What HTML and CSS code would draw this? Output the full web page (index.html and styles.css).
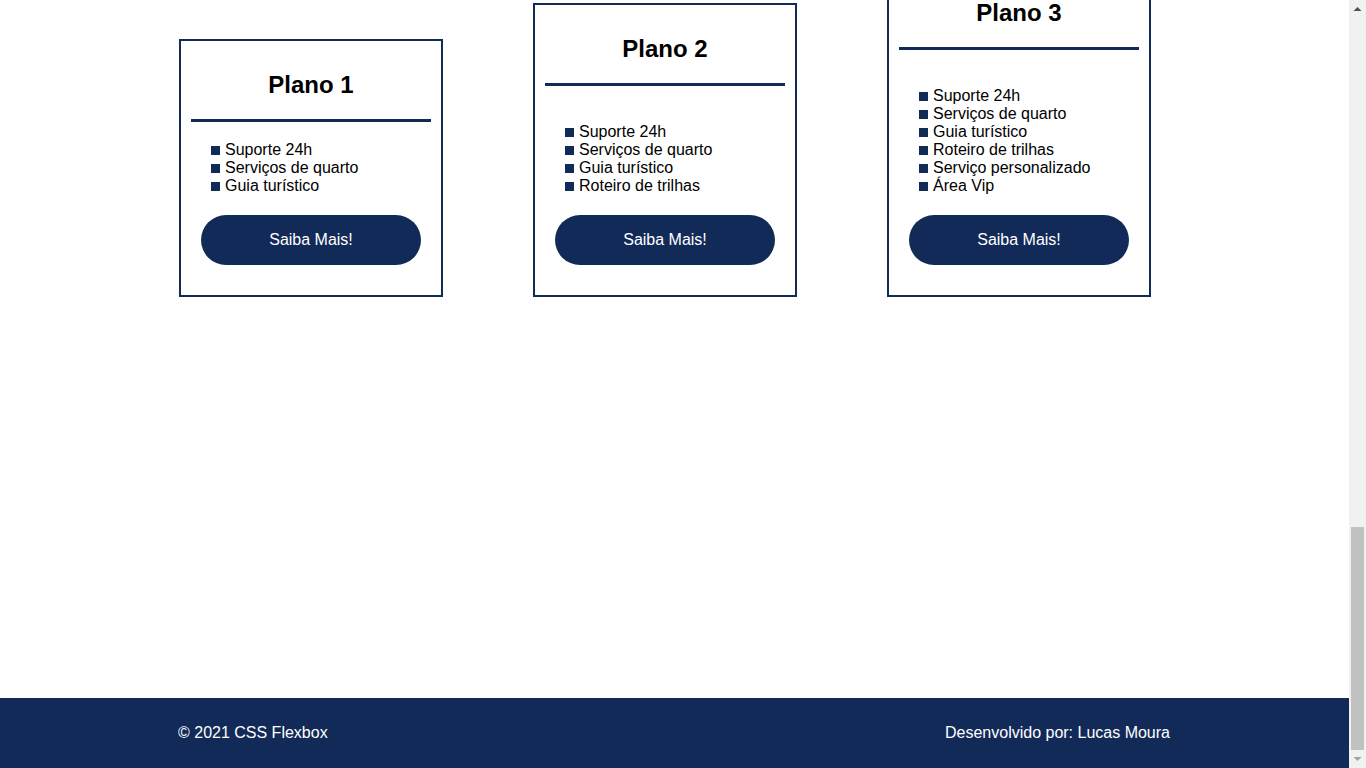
FILE: index.html
```html
<!DOCTYPE html>
<html lang="pt-BR">
<head>
<meta charset="utf-8">
<title>CSS Flexbox - Planos</title>
<link rel="stylesheet" href="styles.css">
</head>
<body>
<div class="window">
  <div class="page">
    <section class="plans">
      <article class="card">
        <h2 class="card-title">Plano 1</h2>
        <ul class="features features-short">
          <li>Suporte 24h</li>
          <li>Serviços de quarto</li>
          <li>Guia turístico</li>
        </ul>
        <a class="btn" href="#">Saiba Mais!</a>
      </article>
      <article class="card">
        <h2 class="card-title">Plano 2</h2>
        <ul class="features">
          <li>Suporte 24h</li>
          <li>Serviços de quarto</li>
          <li>Guia turístico</li>
          <li>Roteiro de trilhas</li>
        </ul>
        <a class="btn" href="#">Saiba Mais!</a>
      </article>
      <article class="card">
        <h2 class="card-title">Plano 3</h2>
        <ul class="features">
          <li>Suporte 24h</li>
          <li>Serviços de quarto</li>
          <li>Guia turístico</li>
          <li>Roteiro de trilhas</li>
          <li>Serviço personalizado</li>
          <li>Área Vip</li>
        </ul>
        <a class="btn" href="#">Saiba Mais!</a>
      </article>
    </section>
    <div class="spacer"></div>
    <footer class="footer">
      <p>© 2021 CSS Flexbox</p>
      <p>Desenvolvido por: Lucas Moura</p>
    </footer>
  </div>
  <aside class="scrollbar">
    <div class="sb-btn">
      <svg width="17" height="17" viewBox="0 0 17 17"><polygon points="4.5,11 12.5,11 8.5,7" fill="#505050"/></svg>
    </div>
    <div class="sb-track"><div class="sb-thumb"></div></div>
    <div class="sb-btn">
      <svg width="17" height="17" viewBox="0 0 17 17"><polygon points="4.5,6 12.5,6 8.5,10" fill="#a3a3a3"/></svg>
    </div>
  </aside>
</div>
</body>
</html>
```
FILE: styles.css
```css
* {
  box-sizing: border-box;
}

html, body {
  margin: 0;
  padding: 0;
  height: 100%;
  overflow: hidden;
  background: #ffffff;
  font-family: "Liberation Sans", Arial, sans-serif;
  color: #000000;
}

.window {
  display: flex;
  height: 768px;
}

.page {
  flex: 1;
  display: flex;
  flex-direction: column;
  min-width: 0;
}

.plans {
  height: 297px;
  overflow: hidden;
  display: flex;
  align-items: flex-end;
  gap: 90px;
  padding-left: 179px;
  flex-shrink: 0;
}

.card {
  width: 264px;
  flex-shrink: 0;
  border: 2px solid #122a58;
  padding: 10px;
  display: flex;
  flex-direction: column;
  align-items: stretch;
}

.card-title {
  margin: 20px 0;
  font-size: 24px;
  line-height: 28px;
  font-weight: 700;
  text-align: center;
  padding-bottom: 20px;
  border-bottom: 3px solid #122a58;
  margin-bottom: 0;
}

.features {
  list-style: none;
  margin: 37px 0 0;
  padding: 0 0 0 20px;
  font-size: 16px;
  line-height: 18px;
}

.features-short {
  margin-top: 19px;
}

.features li::before {
  content: "";
  display: inline-block;
  width: 9px;
  height: 9px;
  background: #122a58;
  margin-right: 5px;
}

.btn {
  display: flex;
  align-items: center;
  justify-content: center;
  width: 220px;
  height: 50px;
  margin: 20px auto;
  border-radius: 25px;
  background: #122a58;
  color: #ffffff;
  text-decoration: none;
  font-size: 16px;
}

.spacer {
  flex: 1;
}

.footer {
  height: 70px;
  flex-shrink: 0;
  background: #122a58;
  color: #ffffff;
  display: flex;
  align-items: center;
  justify-content: space-between;
  padding: 0 179px 0 178px;
  font-size: 16px;
}

.footer p {
  margin: 0;
}

.scrollbar {
  width: 17px;
  flex-shrink: 0;
  background: #f1f1f1;
  display: flex;
  flex-direction: column;
}

.sb-btn {
  height: 17px;
  flex-shrink: 0;
}

.sb-btn svg {
  display: block;
}

.sb-track {
  flex: 1;
  display: flex;
  flex-direction: column;
  justify-content: flex-end;
  padding: 0 2px 1px;
}

.sb-thumb {
  height: 223px;
  background: #c1c1c1;
}
```
